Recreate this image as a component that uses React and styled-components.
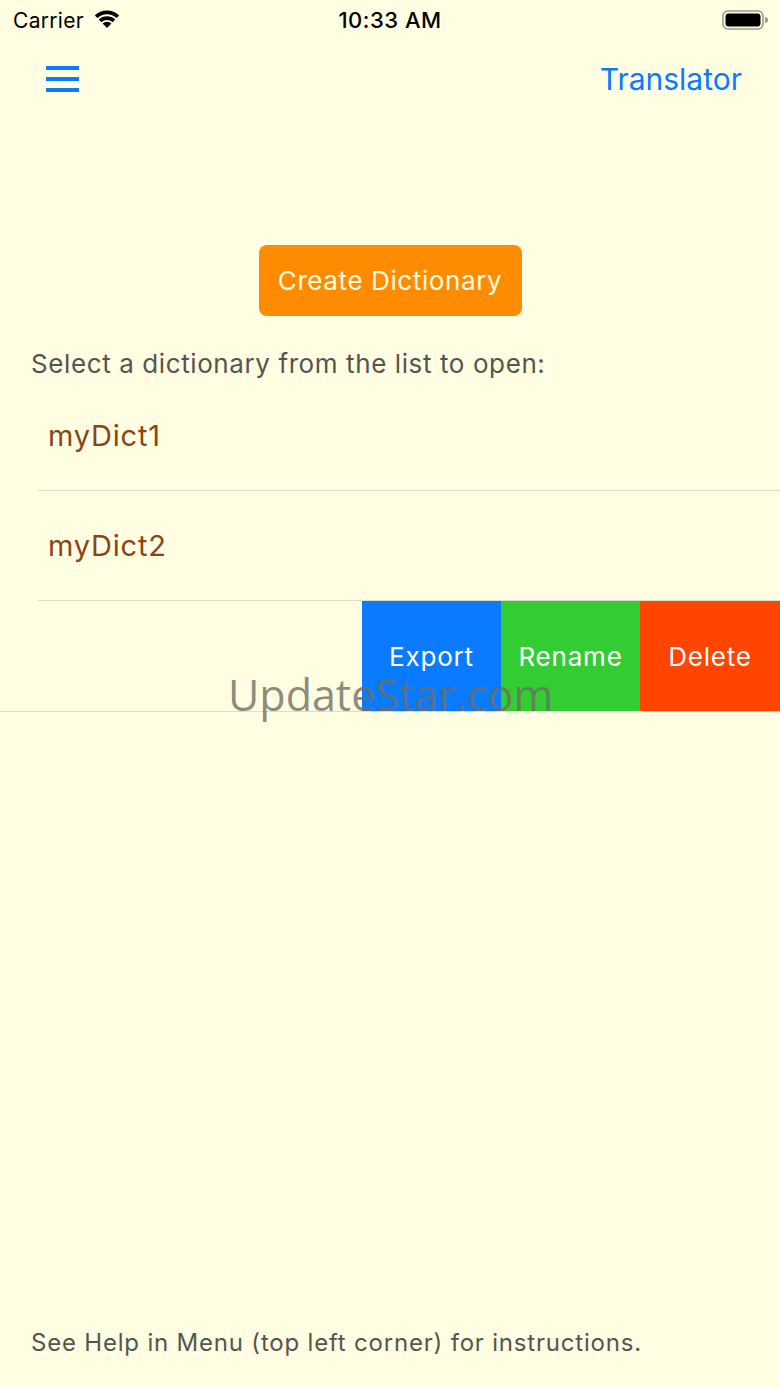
import React from 'react'
import styled, { createGlobalStyle } from 'styled-components'

const Global = createGlobalStyle`
	html, body {
		margin: 0;
		padding: 0;
		background: #fffee3;
	}
	* { box-sizing: border-box; }
`

const rows = ['myDict1', 'myDict2']

const actions = [
	{ label: 'Export', color: '#0a7aff' },
	{ label: 'Rename', color: '#33cd33' },
	{ label: 'Delete', color: '#ff4500' },
]

function Wifi() {
	return (
		<svg width="28" height="22" viewBox="0 0 28 22">
			<path d="M14 21 L9.6 16.4 A6.4 6.4 0 0 1 18.4 16.4 Z" fill="#000" />
			<path d="M5.8 12.6 A11.8 11.8 0 0 1 22.2 12.6 L19.6 15.3 A8 8 0 0 0 8.4 15.3 Z" fill="#000" />
			<path d="M1.8 8.4 A17.6 17.6 0 0 1 26.2 8.4 L23.6 11.1 A14 14 0 0 0 4.4 11.1 Z" fill="#000" />
		</svg>
	)
}

function Battery() {
	return (
		<svg width="46" height="22" viewBox="0 0 46 22">
			<rect x="1" y="2" width="40" height="18" rx="5" fill="none" stroke="#9a9a8a" strokeWidth="1.6" />
			<rect x="3.5" y="4.5" width="35" height="13" rx="3" fill="#000" />
			<path d="M43 8 a3 3 0 0 1 0 6 Z" fill="#9a9a8a" />
		</svg>
	)
}

function Hamburger() {
	return (
		<svg width="34" height="30" viewBox="0 0 34 30">
			<rect x="0" y="2" width="33" height="4" fill="#0a7aff" />
			<rect x="0" y="13" width="33" height="4" fill="#0a7aff" />
			<rect x="0" y="24" width="33" height="4" fill="#0a7aff" />
		</svg>
	)
}

export default function App() {
	return (
		<Screen>
			<Global />
			<StatusBar>
				<Carrier>Carrier <Wifi /></Carrier>
				<Clock>10:33 AM</Clock>
				<BatteryWrap><Battery /></BatteryWrap>
			</StatusBar>
			<NavBar>
				<MenuButton><Hamburger /></MenuButton>
				<NavTitle>Translator</NavTitle>
			</NavBar>
			<Content>
				<CreateButton>Create Dictionary</CreateButton>
				<Prompt>Select a dictionary from the list to open:</Prompt>
				<List>
					{rows.map((r) => (
						<Row key={r}>
							<RowText>{r}</RowText>
						</Row>
					))}
					<SwipedRow>
						{actions.map((a) => (
							<Action key={a.label} $color={a.color}>{a.label}</Action>
						))}
						<Watermark>UpdateStar.com</Watermark>
					</SwipedRow>
				</List>
			</Content>
			<Footer>See Help in Menu (top left corner) for instructions.</Footer>
		</Screen>
	)
}

const Screen = styled.div`
	height: 1387px;
	display: flex;
	flex-direction: column;
	background: #fffee3;
	font-family: Inter, Roboto, "Liberation Sans", sans-serif;
`

const StatusBar = styled.div`
	height: 40px;
	display: flex;
	align-items: center;
	justify-content: space-between;
	padding: 0 12px 0 13px;
	position: relative;
	color: #000;
`

const Carrier = styled.div`
	display: flex;
	align-items: center;
	gap: 9px;
	font-size: 21px;
	letter-spacing: 0.3px;
	svg { margin-top: -4px; }
`

const Clock = styled.div`
	position: absolute;
	left: 0;
	right: 0;
	text-align: center;
	font-size: 22px;
	font-weight: 500;
	letter-spacing: 0.5px;
	pointer-events: none;
`

const BatteryWrap = styled.div`
	display: flex;
	align-items: center;
`

const NavBar = styled.div`
	height: 80px;
	display: flex;
	align-items: center;
	justify-content: space-between;
	padding: 0 38px 0 46px;
`

const MenuButton = styled.div`
	display: flex;
	margin-top: -2px;
`

const NavTitle = styled.div`
	font-size: 30px;
	color: #0a7aff;
	margin-top: -2px;
`

const Content = styled.div`
	flex: 1;
	display: flex;
	flex-direction: column;
	padding-top: 125px;
`

const CreateButton = styled.div`
	align-self: center;
	width: 263px;
	height: 71px;
	border-radius: 8px;
	background: #ff8c00;
	color: #fffee3;
	font-size: 26px;
	letter-spacing: 0.6px;
	display: flex;
	align-items: center;
	justify-content: center;
`

const Prompt = styled.div`
	margin: 31px 0 0 31px;
	font-size: 26px;
	letter-spacing: 0.6px;
	color: #555550;
	line-height: 34px;
`

const List = styled.div`
	display: flex;
	flex-direction: column;
`

const Row = styled.div`
	height: 110px;
	margin-left: 38px;
	padding-left: 10px;
	display: flex;
	align-items: center;
	border-bottom: 1.5px solid #dcdcc8;
`

const RowText = styled.div`
	font-size: 29px;
	letter-spacing: 0.8px;
	color: #8b4513;
`

const SwipedRow = styled.div`
	height: 111px;
	display: flex;
	justify-content: flex-end;
	border-bottom: 1.5px solid #dcdcc8;
	position: relative;
`

const Action = styled.div`
	width: 139px;
	background: ${(p) => p.$color};
	color: #fff;
	font-size: 26px;
	letter-spacing: 0.8px;
	display: flex;
	align-items: center;
	justify-content: center;
	&:nth-child(3) { width: 140px; }
`

const Watermark = styled.div`
	position: absolute;
	left: 228px;
	top: 72px;
	font-family: "Open Sans", sans-serif;
	font-size: 43px;
	line-height: 44px;
	color: rgba(110, 110, 100, 0.8);
	pointer-events: none;
`

const Footer = styled.div`
	padding: 0 0 30px 31px;
	font-size: 24px;
	letter-spacing: 0.8px;
	color: #555550;
`
